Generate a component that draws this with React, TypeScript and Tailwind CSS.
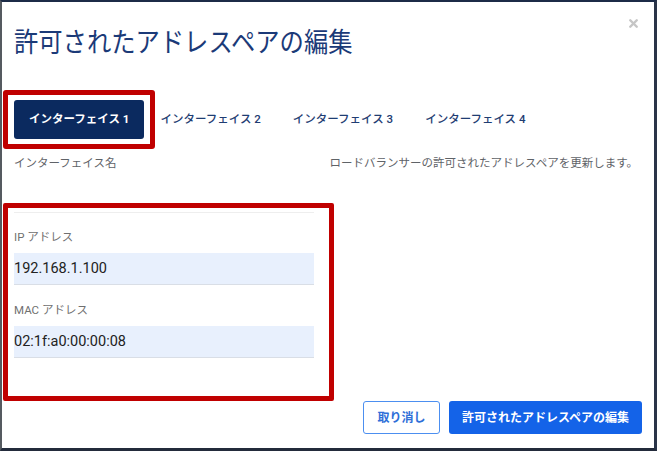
import { X } from 'lucide-react'

const tabs = ['インターフェイス 1', 'インターフェイス 2', 'インターフェイス 3', 'インターフェイス 4']

const fields = [
  { label: 'IP アドレス', value: '192.168.1.100' },
  { label: 'MAC アドレス', value: '02:1f:a0:00:00:08' },
]

const font = "font-['Roboto','Noto_Sans_CJK_JP',sans-serif]"

export default function App() {
  return (
    <div
      className={`${font} relative flex h-[451px] w-[657px] flex-col border-t-2 border-r-[3px] border-b-[3px] border-l-2 border-t-[#1c2b47] border-r-[#2a3448] border-b-[#232b3b] border-l-[#555a60] bg-white pr-[16px] pl-[12px]`}
    >
      <button className="absolute top-[15px] right-[14px] text-[#c6c6c6]">
        <X className="size-[13px]" strokeWidth="4.5" />
      </button>

      <h1 className="origin-left scale-x-[0.9] pt-[21px] text-[27px] leading-[40px] font-normal whitespace-nowrap text-[#1b3a78]">
        許可されたアドレスペアの編集
      </h1>

      <nav className="mt-[37px] flex items-center">
        {tabs.map((tab, i) =>
          i === 0 ? (
            <div key={tab} className="relative">
              <button className="h-[39px] rounded-[3px] bg-[#0b2a5f] px-[15px] text-[11.5px] font-bold text-white">
                {tab}
              </button>
              <div className="pointer-events-none absolute -top-[10px] -right-[11px] -bottom-[10px] -left-[11px] rounded-[3px] border-[5px] border-[#c00000]" />
            </div>
          ) : (
            <button key={tab} className="h-[39px] px-[16px] text-[11.5px] font-medium text-[#1f3d73]">
              {tab}
            </button>
          ),
        )}
      </nav>

      <div className="mt-[16px] flex justify-between text-[11.5px] leading-[16px] text-[#5f6368]">
        <span>インターフェイス名</span>
        <span>ロードバランサーの許可されたアドレスペアを更新します。</span>
      </div>

      <section className="relative mt-[41px] w-[300px]">
        <div className="pointer-events-none absolute -top-[9px] -right-[20px] -bottom-[43px] -left-[11px] rounded-[2px] border-[5px] border-[#c00000]" />
        <hr className="border-[#eeeeee]" />
        {fields.map((field, i) => (
          <div key={field.label} className={i === 0 ? 'mt-[16px]' : 'mt-[17px]'}>
            <label className="block text-[11.5px] leading-[16px] text-[#707070]">{field.label}</label>
            <div className="mt-[8px] flex h-[32px] items-center border-b border-[#d9dee6] bg-[#e8f0fd] text-[14.5px] text-[#222]">
              {field.value}
            </div>
          </div>
        ))}
      </section>

      <footer className="mt-[43px] -mr-[4px] flex justify-end gap-[9px]">
        <button className="h-[33px] w-[77px] rounded-[3px] border border-[#4c8ff0] bg-white text-[12px] font-bold text-[#2f6fd8]">
          取り消し
        </button>
        <button className="h-[33px] w-[193px] rounded-[3px] bg-[#1463e8] text-[12px] font-bold text-white">
          許可されたアドレスペアの編集
        </button>
      </footer>
    </div>
  )
}
